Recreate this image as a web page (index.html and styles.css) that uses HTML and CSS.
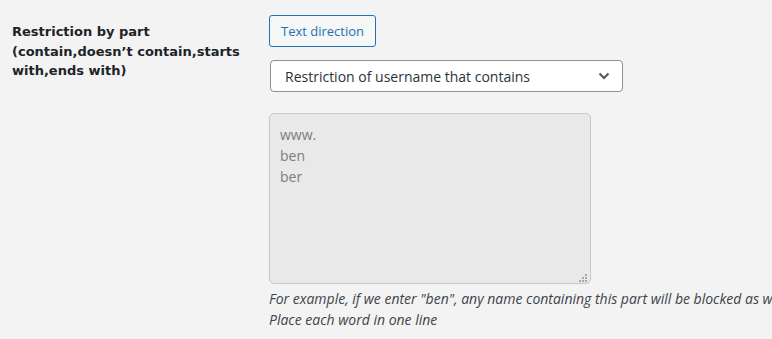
FILE: index.html
```html
<!DOCTYPE html>
<html lang="en">
<head>
    <meta charset="UTF-8">
    <meta name="viewport" content="width=device-width, initial-scale=1.0">
    <title>Restriction settings</title>
    <link rel="stylesheet" href="styles.css">
</head>
<body>
    <div class="form-row">
        <div class="row-label">
            <label for="restrict-part">Restriction by part<br>(contain,doesn’t contain,starts with,ends with)</label>
        </div>
        <div class="row-field">
            <button type="button" class="dir-btn">Text direction</button>

            <div class="select-wrap">
                <select id="restrict-type" class="restrict-select">
                    <option>Restriction of username that contains</option>
                    <option>Restriction of username that doesn’t contain</option>
                    <option>Restriction of username that starts with</option>
                    <option>Restriction of username that ends with</option>
                </select>
                <svg class="select-arrow" width="12" height="8" viewBox="0 0 12 8">
                    <path d="M1.5 1.5 L6 6 L10.5 1.5" fill="none" stroke="#50575e" stroke-width="2"/>
                </svg>
            </div>

            <div class="textarea-wrap">
                <textarea id="restrict-part" class="word-list" readonly>www.
ben
ber</textarea>
                <!-- resize grip -->
                <svg class="grip" width="9" height="9" viewBox="0 0 9 9">
                    <rect x="6" y="0" width="2" height="2" fill="#a7a7a7"/>
                    <rect x="3" y="3" width="2" height="2" fill="#a7a7a7"/>
                    <rect x="6" y="3" width="2" height="2" fill="#a7a7a7"/>
                    <rect x="0" y="6" width="2" height="2" fill="#a7a7a7"/>
                    <rect x="3" y="6" width="2" height="2" fill="#a7a7a7"/>
                    <rect x="6" y="6" width="2" height="2" fill="#a7a7a7"/>
                </svg>
            </div>

            <p class="description">For example, if we enter "ben", any name containing this part will be blocked as well.<br>Place each word in one line</p>
        </div>
    </div>
</body>
</html>
```

FILE: styles.css
```css
body {
    margin: 0;
    padding: 0 0 0 12px;
    background-color: #f3f3f3;
    color: #1d2327;
    font-family: "Open Sans", "Noto Sans", sans-serif;
    font-size: 13px;
    overflow: hidden;
}
.form-row {
    display: flex;
    gap: 25px;
}
.row-label {
    width: 232px;
    flex-shrink: 0;
    padding-top: 22px;
}
.row-label label {
    font-family: "DejaVu Sans", Verdana, sans-serif;
    font-size: 13px;
    font-weight: bold;
    line-height: 19.5px;
    color: #1d2327;
}
.row-field {
    padding-top: 15px;
    min-width: 0;
    flex: 1;
}
.dir-btn {
    display: block;
    height: 32px;
    padding: 0 11px;
    font-family: inherit;
    font-size: 13px;
    color: #2271b1;
    background-color: #f6f7f7;
    border: 1px solid #2271b1;
    border-radius: 3px;
    cursor: pointer;
}
.select-wrap {
    position: relative;
    width: 353px;
    margin: 13px 0 0 1px;
}
.restrict-select {
    appearance: none;
    -webkit-appearance: none;
    width: 100%;
    height: 32px;
    padding: 0 30px 0 14px;
    font-family: inherit;
    font-size: 14px;
    color: #2c3338;
    background-color: #fff;
    border: 1px solid #8c8f94;
    border-radius: 4px;
}
.select-arrow {
    position: absolute;
    right: 13px;
    top: 12px;
    pointer-events: none;
}
.textarea-wrap {
    position: relative;
    width: 322px;
    margin-top: 21px;
}
.word-list {
    display: block;
    box-sizing: border-box;
    width: 322px;
    height: 171px;
    padding: 10px 10px;
    font-family: inherit;
    font-size: 14px;
    line-height: 21px;
    color: #7b7c84;
    background-color: #e9e9e9;
    border: 1px solid #c8c8c8;
    border-radius: 5px;
    outline: none;
    resize: none;
}
.grip {
    position: absolute;
    right: 3px;
    bottom: 1px;
}
.description {
    margin: 4px 0 0;
    font-size: 14px;
    font-style: italic;
    line-height: 21px;
    color: #3c434a;
    white-space: nowrap;
}
```
